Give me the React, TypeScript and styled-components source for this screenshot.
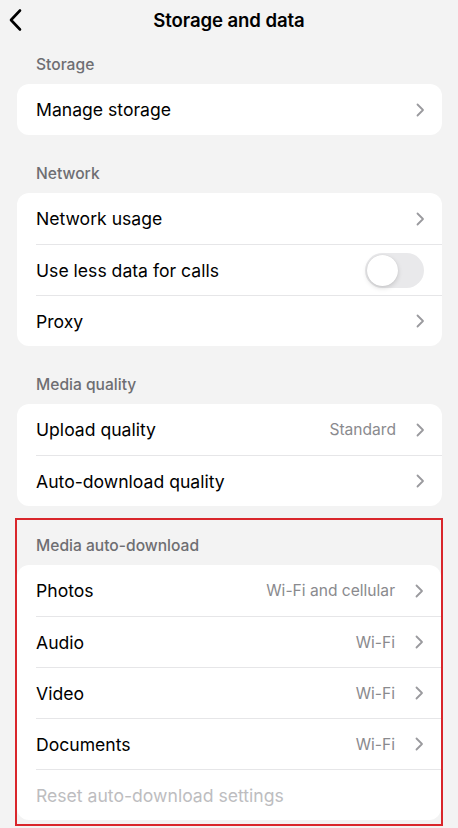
import React from "react";
import styled, { createGlobalStyle } from "styled-components";

const GlobalStyle = createGlobalStyle`
  html, body {
    margin: 0;
    padding: 0;
    background: #f3f3f3;
  }
  body {
    font-family: Inter, "Noto Sans", "Liberation Sans", sans-serif;
    -webkit-font-smoothing: antialiased;
  }
`;

type Item = {
  label: string;
  value?: string;
  chevron?: boolean;
  toggle?: boolean;
  disabled?: boolean;
};

const sections: { title: string; items: Item[] }[] = [
  { title: "Storage", items: [{ label: "Manage storage", chevron: true }] },
  {
    title: "Network",
    items: [
      { label: "Network usage", chevron: true },
      { label: "Use less data for calls", toggle: true },
      { label: "Proxy", chevron: true },
    ],
  },
  {
    title: "Media quality",
    items: [
      { label: "Upload quality", value: "Standard", chevron: true },
      { label: "Auto-download quality", chevron: true },
    ],
  },
];

const autoDownload: Item[] = [
  { label: "Photos", value: "Wi-Fi and cellular", chevron: true },
  { label: "Audio", value: "Wi-Fi", chevron: true },
  { label: "Video", value: "Wi-Fi", chevron: true },
  { label: "Documents", value: "Wi-Fi", chevron: true },
  { label: "Reset auto-download settings", disabled: true },
];

function Chevron() {
  return (
    <ChevronSvg width="9" height="14" viewBox="0 0 9 14">
      <path
        d="M1.5 1.5 L7 7 L1.5 12.5"
        fill="none"
        stroke="#9a9a9e"
        strokeWidth="1.8"
        strokeLinecap="round"
        strokeLinejoin="round"
      />
    </ChevronSvg>
  );
}

function SettingRow({ item }: { item: Item }) {
  return (
    <Row>
      <Label $disabled={item.disabled}>{item.label}</Label>
      <Right>
        {item.value && <Value>{item.value}</Value>}
        {item.chevron && <Chevron />}
        {item.toggle && (
          <Toggle>
            <Knob />
          </Toggle>
        )}
      </Right>
    </Row>
  );
}

export default function App() {
  return (
    <Page>
      <GlobalStyle />
      <TopBar>
        <BackButton>
          <svg width="16" height="24" viewBox="0 0 16 24">
            <path
              d="M12 2.5 L3 12 L12 21.5"
              fill="none"
              stroke="#000"
              strokeWidth="2.6"
              strokeLinecap="round"
              strokeLinejoin="round"
            />
          </svg>
        </BackButton>
        <Title>Storage and data</Title>
      </TopBar>

      {sections.map((s, i) => (
        <Section key={s.title} $first={i === 0}>
          <SectionTitle>{s.title}</SectionTitle>
          <Card>
            {s.items.map((it) => (
              <SettingRow key={it.label} item={it} />
            ))}
          </Card>
        </Section>
      ))}

      <Highlight>
        <SectionTitle>Media auto-download</SectionTitle>
        <Card>
          {autoDownload.map((it) => (
            <SettingRow key={it.label} item={it} />
          ))}
        </Card>
      </Highlight>
    </Page>
  );
}

const Page = styled.div`
  width: 458px;
  min-height: 828px;
  background: #f3f3f3;
  display: flex;
  flex-direction: column;
`;

const TopBar = styled.div`
  height: 40px;
  position: relative;
  display: flex;
  align-items: center;
  justify-content: center;
`;

const BackButton = styled.div`
  position: absolute;
  left: 8px;
  top: 8px;
  width: 16px;
  height: 24px;
  display: flex;
`;

const Title = styled.h1`
  margin: 0;
  font-size: 18.6px;
  font-weight: 600;
  color: #000;
  letter-spacing: -0.1px;
`;

const Section = styled.div<{ $first?: boolean }>`
  margin: ${(p) => (p.$first ? "14px" : "28px")} 16px 0 17px;
  display: flex;
  flex-direction: column;
`;

const SectionTitle = styled.div`
  height: 22px;
  line-height: 22px;
  padding-left: 19px;
  margin-bottom: 8px;
  font-size: 15.6px;
  font-weight: 500;
  color: #6e6e72;
`;

const Card = styled.div`
  background: #fff;
  border-radius: 12px;
  overflow: hidden;
`;

const Row = styled.div`
  height: 51px;
  box-sizing: border-box;
  margin-left: 19px;
  padding-right: 19px;
  display: flex;
  align-items: center;
  justify-content: space-between;
  & + & {
    border-top: 1px solid #e6e6e8;
  }
`;

const Label = styled.span<{ $disabled?: boolean }>`
  font-size: 17.6px;
  color: ${(p) => (p.$disabled ? "#bdbdc0" : "#000")};
`;

const Right = styled.div`
  display: flex;
  align-items: center;
  gap: 20px;
`;

const Value = styled.span`
  font-size: 15.6px;
  color: #8a8a8e;
`;

const ChevronSvg = styled.svg`
  display: block;
  margin-right: -2px;
`;

const Toggle = styled.div`
  width: 59px;
  height: 35px;
  border-radius: 18px;
  background: #e9e9eb;
  position: relative;
  margin-right: -1px;
`;

const Knob = styled.div`
  position: absolute;
  left: 2px;
  top: 2px;
  width: 31px;
  height: 31px;
  border-radius: 50%;
  background: #fff;
  box-shadow: 0 2px 5px rgba(0, 0, 0, 0.15), 0 0 1px rgba(0, 0, 0, 0.12);
`;

const Highlight = styled.div`
  margin: 12px 0 0 15px;
  width: 428px;
  box-sizing: border-box;
  border: 2px solid #d9262b;
  padding-top: 15px;
  padding-bottom: 4px;
`;
